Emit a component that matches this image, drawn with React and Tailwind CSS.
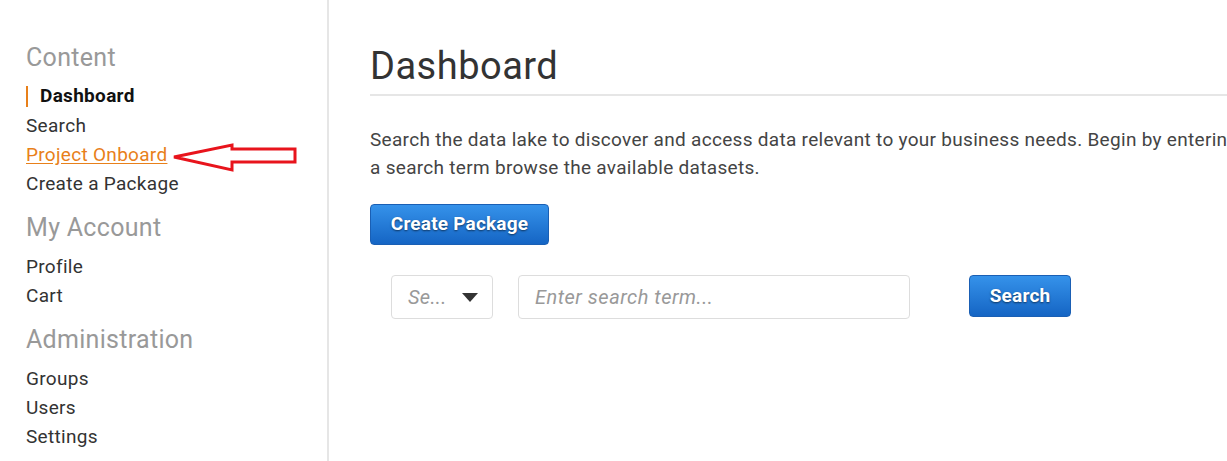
import React from 'react';

const SectionTitle = ({ children, first }) => (
  <h2 className={`text-[25px] leading-8 text-[#999999] ${first ? '' : 'mt-[14px]'} mb-2`}>{children}</h2>
);

const NavItem = ({ children, active, highlight }) => {
  if (active) {
    return (
      <div className="flex items-center h-[29px]">
        <span className="w-[2px] h-[21px] bg-[#e8801a] mr-3"></span>
        <span className="font-bold text-[#111111]">{children}</span>
      </div>
    );
  }
  return (
    <div className="h-[29px] leading-[29px]">
      <a className={highlight ? 'text-[#e8801a] underline underline-offset-2' : 'text-[#333333]'}>{children}</a>
    </div>
  );
};

const BlueButton = ({ children, className }) => (
  <button
    className={`rounded-[4px] border border-[#1a5fb4] bg-gradient-to-b from-[#3592ea] to-[#1565c4] text-white font-bold text-[19px] tracking-[0.2px] [text-shadow:0_1px_2px_rgba(0,0,0,0.55)] ${className}`}
  >
    {children}
  </button>
);

export default function App() {
  return (
    <div className="flex h-[461px] w-[1227px] overflow-hidden bg-white font-['Roboto',sans-serif] text-[19px] tracking-[0.3px]">
      {/* sidebar */}
      <aside className="relative w-[329px] shrink-0 border-r-2 border-[#e6e6e6] pl-[26px] pt-[42px]">
        <SectionTitle first>Content</SectionTitle>
        <NavItem active>Dashboard</NavItem>
        <NavItem>Search</NavItem>
        <NavItem highlight>Project Onboard</NavItem>
        <NavItem>Create a Package</NavItem>

        <SectionTitle>My Account</SectionTitle>
        <NavItem>Profile</NavItem>
        <NavItem>Cart</NavItem>

        <SectionTitle>Administration</SectionTitle>
        <NavItem>Groups</NavItem>
        <NavItem>Users</NavItem>
        <NavItem>Settings</NavItem>

        {/* annotation arrow */}
        <svg className="absolute left-[165px] top-[135px]" width="140" height="40" viewBox="0 0 140 40">
          <polygon
            points="9,22 67,10 67,14 130,14 130,27 67,27 67,35"
            fill="none"
            stroke="#e8141c"
            strokeWidth="3"
            strokeLinejoin="miter"
          />
        </svg>
      </aside>

      {/* main */}
      <main className="flex-1 min-w-0 pl-[41px] pt-[44px]">
        <div className="w-[1000px] border-b-2 border-[#e6e6e6] pb-[6px]">
          <h1 className="text-[38px] leading-[44px] tracking-[0.5px] text-[#333333]">Dashboard</h1>
        </div>
        <p className="mt-[30px] w-[876px] leading-[28px] text-[#444444]">
          Search the data lake to discover and access data relevant to your business needs. Begin by entering a search term browse the available datasets.
        </p>
        <BlueButton className="mt-[22px] h-[41px] w-[179px]">Create Package</BlueButton>

        <div className="mt-[30px] ml-[21px] flex items-start">
          <div className="flex h-[44px] w-[102px] items-center justify-between rounded-[4px] border border-[#dddddd] pl-4 pr-[14px]">
            <span className="italic text-[20px] text-[#999999]">Se...</span>
            <svg width="16" height="9" viewBox="0 0 16 9">
              <polygon points="0,0 16,0 8,9" fill="#333333" />
            </svg>
          </div>
          <div className="ml-[25px] flex h-[44px] w-[392px] items-center rounded-[4px] border border-[#dddddd] px-4">
            <span className="italic text-[20px] tracking-[0.5px] text-[#999999]">Enter search term...</span>
          </div>
          <BlueButton className="ml-[59px] h-[42px] w-[102px]">Search</BlueButton>
        </div>
      </main>
    </div>
  );
}
